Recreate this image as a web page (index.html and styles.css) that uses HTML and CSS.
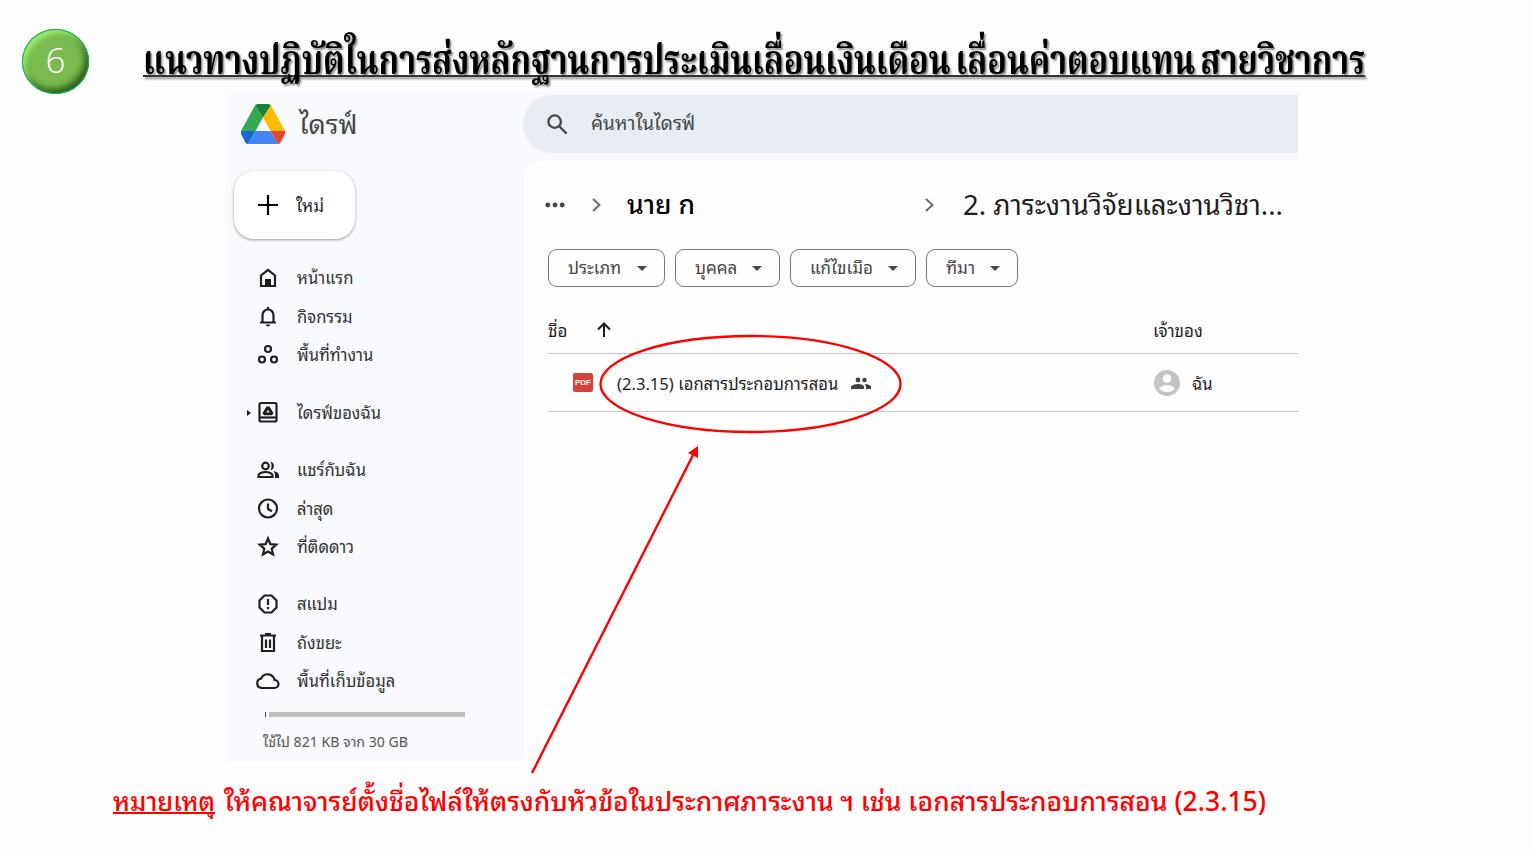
FILE: index.html
```html
<!DOCTYPE html>
<html lang="th">
	<head>
		<meta charset="utf-8">
		<title>แนวทางปฏิบัติในการส่งหลักฐาน</title>
		<link rel="stylesheet" href="styles.css">
	</head>
	<body>
		<header class="slide-header">
			<div class="step">6</div>
			<h1 class="title">แนวทางปฏิบัติในการส่งหลักฐานการประเมินเลื่อนเงินเดือน เลื่อนค่าตอบแทน สายวิชาการ</h1>
		</header>

		<div class="drive">
			<aside class="sidebar">
				<div class="brand">
					<svg class="logo" viewBox="0 0 44 40">
						<path d="M17 0h10q2 0 3 1.500L22 13.500 14 1.500Q15 0 17 0z" fill="#188038"/>
						<path d="M14 1.500L0 27h14.500L22 13.500z" fill="#34a853"/>
						<path d="M30 1.500L44 27H29.500L22 13.500z" fill="#fbbc04"/>
						<path d="M0 27h14.500L7 40q-1.500 0-2.500-1.500L.5 31q-1-2-.5-4z" fill="#1967d2"/>
						<path d="M44 27H29.500L37 40q1.500 0 2.500-1.500L43.500 31q1-2 .5-4z" fill="#ea4335"/>
						<path d="M14.500 27h15L37 40H7z" fill="#4285f4"/>
					</svg>
					<span class="brand-name">ไดรฟ์</span>
				</div>
				<div class="new-button">
					<svg class="plus" viewBox="0 0 20 20"><path d="M10 0v20M0 10h20"/></svg>
					<span>ใหม่</span>
				</div>
				<nav class="nav">
					<div class="nav-group">
						<div class="nav-item">
							<svg class="icon" viewBox="0 0 24 24"><path d="M5 20V9.500L12 4l7 5.500V20z"/><path class="solid" d="M9 13h6v7H9z"/></svg>
							<span>หน้าแรก</span>
						</div>
						<div class="nav-item">
							<svg class="icon" viewBox="0 0 24 24"><path d="M4 17.500h16M6.500 17v-7a5.500 5.500 0 0 1 11 0v7M12 4.500V2"/><path class="solid" d="M10 19.500h4a2 2 0 0 1-4 0z"/></svg>
							<span>กิจกรรม</span>
						</div>
						<div class="nav-item">
							<svg class="icon" viewBox="0 0 24 24"><circle cx="12" cy="6" r="3"/><circle cx="6" cy="16.500" r="3"/><circle cx="18" cy="16.500" r="3"/></svg>
							<span>พื้นที่ทำงาน</span>
						</div>
					</div>
					<div class="nav-group">
						<div class="nav-item has-caret">
							<svg class="icon" viewBox="0 0 24 24"><rect x="3.500" y="2" width="17" height="18.500" rx="1.500"/><path d="M3.500 16.500h17"/><path class="solid" fill-rule="evenodd" d="M10.500 5.500h3l4 6.500-1.500 2.200H8L6.500 12zM12 8.800l-1.600 2.800h3.200z"/></svg>
							<span>ไดรฟ์ของฉัน</span>
						</div>
					</div>
					<div class="nav-group">
						<div class="nav-item">
							<svg class="icon" viewBox="0 0 24 24"><circle cx="9.500" cy="8" r="3.300"/><path d="M2.500 19v-1.500c0-2 3.500-3.500 7-3.500s7 1.500 7 3.500V19z"/><path class="solid" d="M14.500 3.800a4.300 4.300 0 0 1 0 8.400q2.200-4.200 0-8.400zM17.500 13q5.500 1 5.500 4.500V20h-4v-2.500q0-3-1.500-4.500z"/></svg>
							<span>แชร์กับฉัน</span>
						</div>
						<div class="nav-item">
							<svg class="icon" viewBox="0 0 24 24"><circle cx="12" cy="11.500" r="9"/><path d="M12 6.500V12l4 2.300"/></svg>
							<span>ล่าสุด</span>
						</div>
						<div class="nav-item">
							<svg class="icon" viewBox="0 0 24 24"><path d="M12 3.500l2.300 5.700 6 .5-4.600 4 1.400 5.800-5.100-3-5.100 3 1.400-5.800-4.600-4 6-.5z"/></svg>
							<span>ที่ติดดาว</span>
						</div>
					</div>
					<div class="nav-group">
						<div class="nav-item">
							<svg class="icon" viewBox="0 0 24 24"><path d="M8.500 3.500h7l5 5v7l-5 5h-7l-5-5v-7z"/><path d="M12 7v6M12 15v2.200"/></svg>
							<span>สแปม</span>
						</div>
						<div class="nav-item">
							<svg class="icon" viewBox="0 0 24 24"><path d="M4 4.500h16M9 3h6M6 5v15h12V5M10 8.500V17M14 8.500V17"/></svg>
							<span>ถังขยะ</span>
						</div>
						<div class="nav-item">
							<svg class="icon" viewBox="0 0 24 24"><path d="M5.500 19a4.800 4.800 0 0 1-.3-9.500A7 7 0 0 1 18.500 11a4 4 0 0 1 0 8z"/></svg>
							<span>พื้นที่เก็บข้อมูล</span>
						</div>
					</div>
				</nav>
				<div class="storage-bar"></div>
				<div class="storage-text">ใช้ไป 821 KB จาก 30 GB</div>
			</aside>

			<main class="main">
				<div class="search">
					<svg class="search-icon" viewBox="0 0 22 22"><circle cx="8" cy="8" r="6.500"/><path d="M12.800 12.800L20.500 20.500"/></svg>
					<span>ค้นหาในไดรฟ์</span>
				</div>
				<section class="content">
					<div class="breadcrumb">
						<svg class="dots" viewBox="0 0 20 6"><circle cx="2.800" cy="3" r="2.400"/><circle cx="10" cy="3" r="2.400"/><circle cx="17.200" cy="3" r="2.400"/></svg>
						<svg class="chevron" viewBox="0 0 9 14"><path d="M1 1l6.500 6L1 13"/></svg>
						<span class="crumb-owner">นาย ก</span>
						<svg class="chevron" viewBox="0 0 9 14"><path d="M1 1l6.500 6L1 13"/></svg>
						<span class="crumb-folder">2. ภาระงานวิจัยและงานวิชา...</span>
					</div>
					<div class="filters">
						<div class="chip chip-type"><span>ประเภท</span></div>
						<div class="chip chip-people"><span>บุคคล</span></div>
						<div class="chip chip-edited"><span>แก้ไขเมือ</span></div>
						<div class="chip chip-source"><span>ทีมา</span></div>
					</div>
					<div class="table-head">
						<span class="col-name">ชื่อ</span>
						<svg class="sort" viewBox="0 0 14 15"><path d="M7 15V1.500M1 7.500l6-6 6 6"/></svg>
						<span class="col-owner">เจ้าของ</span>
					</div>
					<div class="file-row">
						<div class="pdf">PDF</div>
						<span class="file-name">(2.3.15) เอกสารประกอบการสอน</span>
						<svg class="shared" viewBox="0 0 20 12"><circle cx="7" cy="3" r="2.400"/><circle cx="13.500" cy="3" r="2.200"/><path d="M0 12V9.500Q2 7 7 7t6 2.500V12zM14 7q5 .5 6 2.500V12h-5V9.500Q15 8 14 7z"/></svg>
						<svg class="avatar" viewBox="0 0 26 26"><circle cx="13" cy="13" r="13" fill="#c4c4c4"/><circle cx="13" cy="8.500" r="4.300" fill="#fff"/><path d="M5 18.500q3-3.500 8-3.500t8 3.500q-3 3.500-8 3.500t-8-3.500z" fill="#fff"/></svg>
						<span class="owner-name">ฉัน</span>
					</div>
				</section>
			</main>
		</div>

		<p class="note"><u>หมายเหตุ</u> <span>ให้คณาจารย์ตั้งชื่อไฟล์ให้ตรงกับหัวข้อในประกาศภาระงาน ฯ เช่น เอกสารประกอบการสอน (2.3.15)</span></p>

		<!-- red ellipse and arrow on top of the window -->
		<svg class="callout" viewBox="0 0 1531 854">
			<ellipse cx="750.500" cy="384" rx="150" ry="48"/>
			<path d="M532 773L693 455"/>
			<path class="head" d="M698 446v12l-10-5z"/>
		</svg>
	</body>
</html>
```
FILE: styles.css
```css
body {
	margin: 0;
	width: 1531px;
	height: 854px;
	position: relative;
	overflow: hidden;
	background: #fdfdfd;
	color: #1f1f1f;
	font-family: "Noto Sans Thai Looped", "Loma", "Garuda", "Noto Sans Thai", "Noto Sans", sans-serif;
	white-space: nowrap;
}
svg {
	flex: none;
}

/* slide title */
.slide-header {
	display: flex;
	height: 92px;
	box-sizing: border-box;
	padding: 29px 0 0 22px;
}
.step {
	flex: none;
	width: 67px;
	height: 65px;
	border-radius: 50%;
	background: #7aba50;
	box-shadow: inset 0 0 0 1px #10b060, inset 4px 5px 5px #9bea68, inset -4px -5px 6px #35601c, inset 0 0 9px #3d8b25;
	color: #fff;
	font: 300 35px/62px "Open Sans", sans-serif;
	text-align: center;
}
.title {
	margin: 0 0 0 54px;
	font: bold 40px/68px "Kinnari", "Norasi", "Noto Serif Thai", "Liberation Serif", serif;
	color: #000;
	text-decoration: underline 2px #333;
	text-decoration-skip-ink: none;
	text-underline-offset: 1px;
	text-shadow: 2px 2px 2px #888;
	word-spacing: -4px;
	transform: scaleX(.8095);
	transform-origin: 0 0;
}

.drive {
	display: flex;
	width: 1072px;
	height: 669px;
	margin-left: 226px;
	background: #f8fafd;
}
.sidebar {
	width: 297px;
	flex: none;
}
.brand {
	display: flex;
	align-items: center;
	gap: 14px;
	height: 64px;
	padding-left: 15px;
}
.logo {
	width: 44px;
	height: 40px;
}
.brand-name {
	padding-bottom: 6px;
	font-size: 27px;
	color: #444746;
}
.new-button {
	display: flex;
	align-items: center;
	gap: 18px;
	box-sizing: border-box;
	width: 121px;
	height: 68px;
	margin: 15px 0 0 8px;
	padding-left: 24px;
	border-radius: 20px;
	background: #fff;
	box-shadow: 0 1px 3px #999;
	font-size: 17px;
}
.new-button span {
	padding-bottom: 2px;
}
.plus {
	width: 20px;
	height: 20px;
	fill: none;
	stroke: #000;
	stroke-width: 2.2;
}
.nav {
	display: grid;
	gap: 19.2px;
	margin-top: 20px;
}
.nav-item {
	display: flex;
	align-items: center;
	gap: 17px;
	height: 38.4px;
	padding-left: 30px;
	font-size: 16.600px;
	color: #333;
}
.nav-item span {
	padding-bottom: 3px;
}
.has-caret {
	padding-left: 21px;
	gap: 0;
}
.has-caret:before {
	content: '';
	border: 3.500px solid transparent;
	border-left: 4px solid #1f1f1f;
	border-right: 0;
	margin-right: 5px;
}
.has-caret .icon {
	margin-right: 17px;
}
.icon {
	width: 24px;
	height: 24px;
	fill: none;
	stroke: #1f1f1f;
	stroke-width: 2.2;
}
.icon .solid {
	fill: #1f1f1f;
	stroke: none;
}
.storage-bar {
	width: 200px;
	height: 5px;
	box-sizing: border-box;
	margin: 12px 0 0 39px;
	border-left: 1px solid #444;
	padding-left: 3px;
	background: #bdbdbd content-box;
}
.storage-text {
	margin: 12px 0 0 37px;
	font-size: 14.100px;
	line-height: 24px;
	color: #555;
}

.main {
	flex: 1;
	min-width: 0;
}
.search {
	display: flex;
	align-items: center;
	gap: 23px;
	height: 58px;
	margin-top: 3px;
	padding-left: 24px;
	border-radius: 29px 0 0 29px;
	background: #e8edf4;
	font-size: 19px;
	color: #444746;
	box-sizing: border-box;
}
.search span {
	padding-bottom: 5px;
}
.search-icon {
	width: 21px;
	height: 21px;
	fill: none;
	stroke: #444746;
	stroke-width: 2.4;
}
.content {
	height: 600px;
	margin: 8px 0 0 1px;
	border-radius: 20px 0 0 0;
	background: #fefefe;
}
.breadcrumb {
	display: flex;
	align-items: center;
	height: 88px;
	padding-left: 21px;
}
.dots {
	width: 20px;
	height: 6px;
	fill: #444746;
}
.chevron {
	width: 9px;
	height: 14px;
	margin-left: 27px;
	fill: none;
	stroke: #6b6b6b;
	stroke-width: 2;
}
.crumb-owner {
	width: 271px;
	margin-left: 26px;
	padding-bottom: 6px;
	font-size: 26.500px;
	font-weight: 500;
	color: #000;
}
.crumb-folder {
	margin-left: 29px;
	padding-bottom: 5px;
	font-size: 27.500px;
}
.filters {
	display: flex;
	gap: 10px;
	padding-left: 24px;
}
.chip {
	display: flex;
	align-items: center;
	justify-content: space-between;
	box-sizing: border-box;
	height: 38px;
	padding: 0 17px 0 19px;
	border: 1px solid #747775;
	border-radius: 9px;
	font-size: 17px;
	color: #444746;
}
.chip span {
	padding-bottom: 3px;
}
.chip:after {
	content: '';
	border: 5px solid transparent;
	border-top-color: #444746;
	border-bottom: 0;
}
.chip-type { width: 117px; }
.chip-people { width: 105px; }
.chip-edited { width: 126px; }
.chip-source { width: 92px; }
.table-head {
	display: flex;
	align-items: center;
	height: 48px;
	margin: 18px 0 0 24px;
	font-size: 17px;
	border-bottom: 1px solid #c4c7c5;
}
.col-name {
	width: 49px;
}
.sort {
	width: 14px;
	height: 15px;
	fill: none;
	stroke: #1f1f1f;
	stroke-width: 2;
}
.col-owner {
	margin-left: 542px;
}
.file-row {
	display: flex;
	align-items: center;
	height: 57px;
	margin-left: 24px;
	padding-left: 25px;
	border-bottom: 1px solid #c4c7c5;
	font-size: 16.600px;
}
.pdf {
	width: 20px;
	height: 19px;
	border-radius: 2px;
	background: #d5433a;
	color: #fff;
	font: bold 8px/19px "Liberation Sans", sans-serif;
	text-align: center;
}
.file-name {
	width: 221px;
	margin-left: 24px;
}
.shared {
	width: 20px;
	height: 12px;
	margin-left: 13px;
	fill: #3c4043;
}
.avatar {
	width: 26px;
	height: 26px;
	margin-left: 283px;
}
.owner-name {
	margin-left: 12px;
}

.note {
	margin: 13px 0 0 113px;
	font-size: 26.450px;
	font-weight: 500;
	line-height: 50px;
	color: #f00;
}
.note u {
	margin-right: 2px;
	font-size: 25.500px;
	text-decoration-thickness: 2px;
	text-decoration-skip-ink: none;
}

.callout {
	position: absolute;
	left: 0;
	top: 0;
	width: 1531px;
	height: 854px;
	fill: none;
	stroke: #f00;
	stroke-width: 2.4;
}
.callout .head {
	fill: #f00;
	stroke: none;
}
```
